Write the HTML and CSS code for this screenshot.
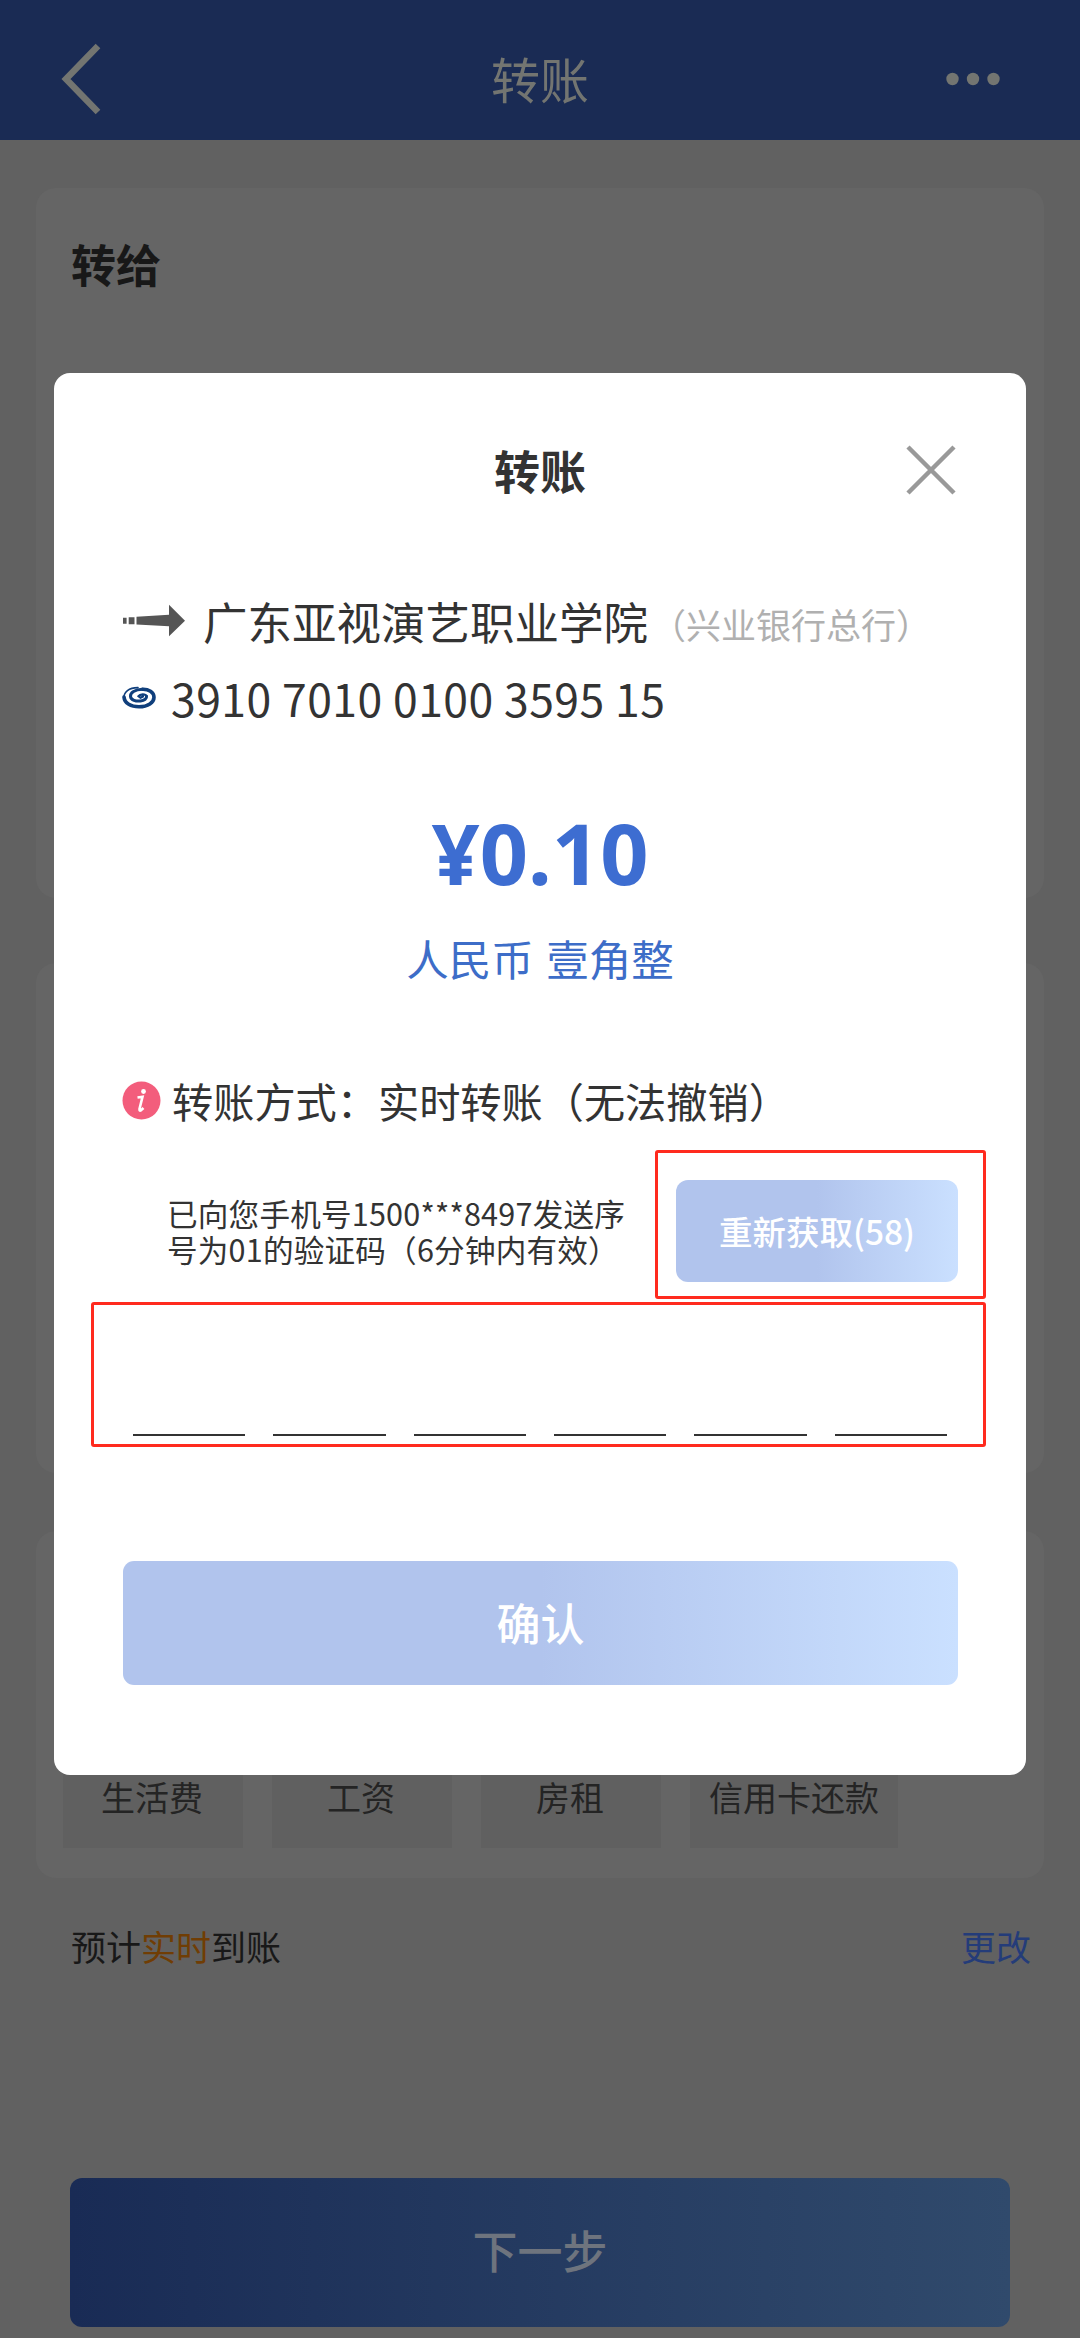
FILE: index.html
```html
<!DOCTYPE html>
<html lang="zh-CN">
<head>
<meta charset="utf-8">
<title>转账</title>
<link rel="stylesheet" href="styles.css">
</head>
<body>
<div class="screen">
  <header class="topbar">
    <svg class="back" width="42" height="72" viewBox="0 0 42 72"><path d="M38 3 6 36 38 69" fill="none" stroke="currentColor" stroke-width="6.500"/></svg>
    <h1 class="topbar-title">转账</h1>
    <svg class="more" width="54" height="14" viewBox="0 0 54 14" fill="currentColor"><circle cx="6.500" cy="7" r="6.200"/><circle cx="27" cy="7" r="6.200"/><circle cx="47.500" cy="7" r="6.200"/></svg>
  </header>
  <main class="content">
    <section class="card card-payee"><h2 class="card-title">转给</h2></section>
    <section class="card card-amount"></section>
    <section class="card card-notes">
      <div class="chips">
        <span class="chip">生活费</span>
        <span class="chip">工资</span>
        <span class="chip">房租</span>
        <span class="chip chip-wide">信用卡还款</span>
      </div>
    </section>
    <div class="arrival"><span>预计<em class="arrival-time">实时</em>到账</span><a class="arrival-change">更改</a></div>
    <button class="next">下一步</button>
  </main>
  <div class="overlay">
    <div class="dialog">
      <div class="dialog-head">
        <span class="dialog-title">转账</span>
        <svg class="close" width="50" height="50" viewBox="0 0 50 50"><path d="M2 2 48 48M48 2 2 48" stroke="#999" stroke-width="4.500"/></svg>
      </div>
      <div class="payee">
        <svg class="arrow" width="64" height="34" viewBox="0 0 64 34" fill="#555"><path d="M1 13.800h3.600v6H1zM6.700 13.200h5.800v7H6.700zM14.500 12.800 47 10.800V.8L63 16.800 47 32.300V22.300L14.500 20.500z"/></svg>
        <span class="payee-name">广东亚视演艺职业学院</span><span class="payee-bank">（兴业银行总行）</span>
      </div>
      <div class="account">
        <svg class="bank-logo" width="34" height="24" viewBox="0 0 34 24" fill="none" stroke="#103f7c" stroke-linecap="round"><path d="M16 1.600C7 1.500 1.500 6 2 12" stroke-width="1.600"/><path d="M2 11C2.500 17.500 9 20.800 17 20.800 26 20.800 32 16.500 32 11.300 32 6 26.500 3 20.500 3.200" stroke-width="3.600"/><path d="M20.500 3.200C13 3.500 8 6.500 8.500 10.500 9 14.200 14 15.500 18.500 15 22.500 14.500 25 12.500 24.500 10.200" stroke-width="3"/><path d="M24.500 10.200C23.500 7.500 18 7.800 16.500 10.200L18.500 11.800 21 10.500" stroke-width="2.200"/></svg>
        <span>3910 7010 0100 3595 15</span>
      </div>
      <div class="sum">¥0.10</div>
      <div class="sum-words">人民币 壹角整</div>
      <div class="method">
        <svg class="info" width="39" height="39" viewBox="0 0 39 39"><circle cx="19.500" cy="19.500" r="19" fill="#f35d7c"/><circle cx="21.500" cy="10.500" r="2.400" fill="#fff"/><path d="M15.500 16.500 20.500 15.800 17.500 28Q17.300 30.300 19 29.300L21.500 27" fill="none" stroke="#fff" stroke-width="2.600"/></svg>
        <span>转账方式：实时转账（无法撤销）</span>
      </div>
      <div class="verify">
        <p class="sent">已向您手机号1500***8497发送序<br>号为01的验证码（6分钟内有效）</p>
        <div class="mark mark-resend"><button class="resend">重新获取(58)</button></div>
      </div>
      <div class="mark code"><i class="digit"></i><i class="digit"></i><i class="digit"></i><i class="digit"></i><i class="digit"></i><i class="digit"></i></div>
      <button class="confirm">确认</button>
    </div>
  </div>
</div>
</body>
</html>
```
FILE: styles.css
```css
* { box-sizing: border-box; margin: 0; padding: 0; }
body { font-family: "Noto Sans CJK SC", sans-serif; color: #333; }
button { border: 0; font-family: inherit; color: #fff; }
svg { display: block; flex: none; }

.screen { position: relative; width: 1080px; height: 2338px; overflow: hidden; background: #616161; }

/* The page behind the dialog is shown in its dimmed colours */
.topbar { height: 140px; padding: 18px 60px 0; display: grid; grid-template-columns: 1fr auto 1fr; align-items: center; background: #1a2b54; color: #737571; }
.topbar-title { font-size: 49px; line-height: 70px; padding-bottom: 2px; font-weight: 400; }
.more { justify-self: end; margin-right: 20px; }
.content { padding: 48px 36px 0; color: #181818; }
.card { border-radius: 20px; background: #656565; }
.card-payee { height: 710px; padding: 46px 35px; }
.card-title { font-size: 45px; line-height: 60px; font-weight: 700; }
.card-amount { height: 510px; margin-top: 65px; }
.card-notes { height: 347px; margin-top: 58px; padding: 217px 27px 0; }
.chips { display: flex; gap: 29px; }
.chip { width: 180px; height: 100px; line-height: 98px; padding-right: 2px; text-align: center; font-size: 34px; background: #606060; color: #242424; }
.chip-wide { width: 208px; padding-right: 0; }
.arrival { display: flex; justify-content: space-between; margin-top: 38px; padding: 0 13px 0 35px; font-size: 35px; line-height: 60px; }
.arrival-time { font-style: normal; color: #703d04; }
.arrival-change { color: #243c79; }
.next { display: block; width: 940px; height: 149px; margin: 202px 0 0 34px; padding-bottom: 6px; border-radius: 12px; background: linear-gradient(90deg, #192b55, #304a6c); color: #6e747e; font-size: 45px; font-weight: 500; line-height: 143px; }

.overlay { position: absolute; inset: 0; padding: 373px 54px 0; }
.dialog { height: 1402px; border-radius: 16px; background: #fff; display: flex; flex-direction: column; }
.dialog-head { height: 194px; padding: 0 70px; display: grid; grid-template-columns: 50px 1fr 50px; align-items: center; }
.dialog-title { grid-column: 2; padding-bottom: 3px; text-align: center; font-size: 46px; font-weight: 700; line-height: 60px; }
.payee { display: flex; align-items: center; height: 108px; padding-left: 68px; }
.payee-name { margin-left: 17px; font-size: 44.5px; line-height: 60px; white-space: nowrap; }
.payee-bank { margin-left: 3px; font-size: 35px; line-height: 60px; padding-top: 5px; color: #b0b0b0; white-space: nowrap; }
.account { display: flex; align-items: center; gap: 15px; height: 46px; padding-left: 68px; font-size: 44.5px; line-height: 46px; letter-spacing: 0.45px; white-space: nowrap; }
.sum { margin-top: 74px; height: 116px; line-height: 116px; text-align: center; font-family: "Noto Sans", sans-serif; font-size: 84.5px; font-weight: 700; color: #3d6dd1; }
.sum-words { height: 60px; margin-top: 17px; line-height: 60px; text-align: center; font-size: 42.5px; word-spacing: 3px; color: #3d6dc8; }
.method { display: flex; align-items: center; gap: 11px; height: 60px; margin-top: 82px; padding-left: 68px; font-size: 41.2px; line-height: 60px; white-space: nowrap; }
.method span { padding-bottom: 1px; }
.verify { display: flex; height: 149px; margin-top: 20px; padding: 0 40px 0 113px; justify-content: space-between; }
.sent { padding-top: 45px; font-size: 30.6px; line-height: 36px; letter-spacing: 0.2px; white-space: nowrap; }
.mark { border: 3px solid #ff2a1e; border-radius: 3px; }
.mark-resend { width: 331px; height: 149px; padding: 27px 0 0 18px; flex: none; }
.resend, .confirm { display: block; padding-bottom: 2px; background: linear-gradient(90deg, #b1c4ed 50%, #cae0ff); font-weight: 500; }
.resend { width: 282px; height: 102px; border-radius: 12px; font-size: 33.5px; }
.code { display: flex; gap: 28px; align-items: flex-end; width: 895px; height: 145px; margin: 3px 0 0 37px; padding: 0 36px 8px 39px; }
.digit { flex: 1; height: 2px; background: #333; }
.confirm { flex: none; width: 835px; height: 124px; margin: 114px 0 0 69px; border-radius: 11px; font-size: 44px; }
```
